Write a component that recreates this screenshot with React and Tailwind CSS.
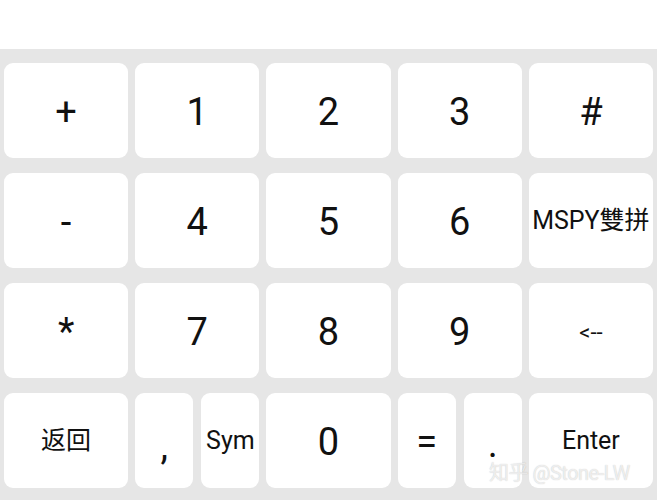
import React from 'react';

const font = { fontFamily: 'Roboto, "Noto Sans CJK SC", sans-serif' };

// one key cap on the keypad
function Key({ children, className = '' }) {
  return (
    <div
      className={`flex items-center justify-center rounded-[9px] bg-white text-[#111] h-[95px] ${className}`}
    >
      {children}
    </div>
  );
}

function SplitKey({ left, right }) {
  return (
    <div className="grid grid-cols-2 gap-[8px]">
      {left}
      {right}
    </div>
  );
}

export default function App() {
  const big = 'text-[38px] leading-none pt-[3px]';
  const label = 'text-[25px] leading-none';

  return (
    <div className="w-[657px] h-[500px] bg-white overflow-hidden" style={font}>
      <div className="h-[49px] bg-white" />
      <div className="relative h-[451px] bg-[#e6e6e6] px-[4px] pt-[14px]">
        <div className="grid grid-cols-5 gap-x-[7px] gap-y-[15px]">
          <Key className={big}>+</Key>
          <Key className={big}>1</Key>
          <Key className={big}>2</Key>
          <Key className={big}>3</Key>
          <Key className={big}>#</Key>

          <Key className={big}>-</Key>
          <Key className={big}>4</Key>
          <Key className={big}>5</Key>
          <Key className={big}>6</Key>
          <Key className={label}>MSPY雙拼</Key>

          <Key className={big}>*</Key>
          <Key className={big}>7</Key>
          <Key className={big}>8</Key>
          <Key className={big}>9</Key>
          <Key className="text-[22px] leading-none pt-[4px]">&lt;--</Key>

          <Key className={label}>返回</Key>
          <SplitKey
            left={<Key className="text-[38px] leading-none pt-[11px]">,</Key>}
            right={<Key className={label}>Sym</Key>}
          />
          <Key className={big}>0</Key>
          <SplitKey
            left={<Key className={big}>=</Key>}
            right={<Key className="text-[38px] leading-none pt-[6px]">.</Key>}
          />
          <Key className={label}>Enter</Key>
        </div>

        {/* watermark over the bottom row */}
        <div className="absolute left-[489px] top-[414px] text-[20px] leading-none text-white/70 tracking-tight [text-shadow:0_0_1px_rgba(0,0,0,0.25)]">
          知乎 @Stone-LW
        </div>
      </div>
    </div>
  );
}
